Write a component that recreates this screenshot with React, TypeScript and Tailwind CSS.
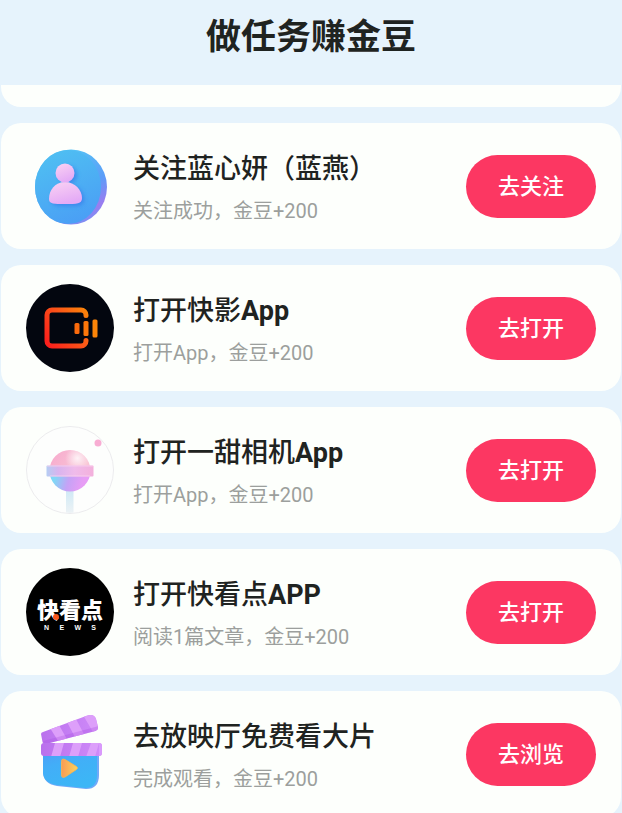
import React from 'react';

interface Task {
  id: string;
  title: string;
  latin?: string;
  reward: string;
  action: string;
  icon: React.ReactNode;
}

function FollowIcon() {
  return (
    <svg viewBox="0 0 88 88" className="w-full h-full" aria-hidden="true">
      <defs>
        <linearGradient id="follow-edge" x1="0.4" y1="0" x2="0.8" y2="1">
          <stop offset="0" stopColor="#55c5f5" />
          <stop offset="0.5" stopColor="#5b9df8" />
          <stop offset="0.8" stopColor="#9a7df0" />
          <stop offset="1" stopColor="#6f96f5" />
        </linearGradient>
        <linearGradient id="follow-face" x1="0.2" y1="0" x2="0.6" y2="1">
          <stop offset="0" stopColor="#4fc0f2" />
          <stop offset="1" stopColor="#4a9ff5" />
        </linearGradient>
        <linearGradient id="follow-body" x1="0" y1="0" x2="0.4" y2="1">
          <stop offset="0" stopColor="#fbd3f3" />
          <stop offset="1" stopColor="#e4abf6" />
        </linearGradient>
        <filter id="follow-shadow" x="-30%" y="-30%" width="170%" height="170%">
          <feGaussianBlur stdDeviation="2" />
        </filter>
      </defs>
      <ellipse cx="45" cy="45" rx="36" ry="37.5" fill="url(#follow-edge)" />
      <ellipse cx="42" cy="45" rx="33" ry="37" fill="url(#follow-face)" />
      <g filter="url(#follow-shadow)" fill="#3479e8" opacity="0.7">
        <circle cx="42" cy="33" r="9" />
        <path d="M26 59c0-10 6-16 16-16s16 7 16 15c0 6-6 6-16 6s-16 0-16-5z" />
      </g>
      <path d="M23 57c0-9 6-17 16-17s17 8 17 16c0 6-5 6-17 6-11 0-16 0-16-5z" fill="url(#follow-body)" />
      <circle cx="39" cy="31" r="9.5" fill="url(#follow-body)" />
    </svg>
  );
}

function KuaiyingIcon() {
  return (
    <svg viewBox="0 0 88 88" className="w-full h-full" aria-hidden="true">
      <defs>
        <linearGradient id="ky" gradientUnits="userSpaceOnUse" x1="20" y1="58" x2="64" y2="26">
          <stop offset="0" stopColor="#fb1f1c" />
          <stop offset="0.5" stopColor="#fb5318" />
          <stop offset="1" stopColor="#fb8a08" />
        </linearGradient>
      </defs>
      <circle cx="44" cy="44" r="44" fill="#03060f" />
      <path
        d="M60 31.500v-.5a5 5 0 0 0-5-5H26a5 5 0 0 0-5 5v26a5 5 0 0 0 5 5h29a5 5 0 0 0 5-5v-.5"
        fill="none"
        stroke="url(#ky)"
        strokeWidth="5"
        strokeLinecap="round"
      />
      <rect x="48.5" y="39" width="5" height="11" rx="1.500" fill="#fb6a0c" />
      <rect x="57.5" y="37" width="5" height="15" rx="1.500" fill="#fb760a" />
      <rect x="66.5" y="35.500" width="5" height="18" rx="1.500" fill="#fb8408" />
    </svg>
  );
}

function LollipopIcon() {
  return (
    <svg viewBox="0 0 88 88" className="w-full h-full" aria-hidden="true">
      <defs>
        <clipPath id="lolli-clip">
          <circle cx="44" cy="44" r="43" />
        </clipPath>
        <linearGradient id="lolli-top" x1="0" y1="0" x2="1" y2="0.3">
          <stop offset="0" stopColor="#f7a9cd" />
          <stop offset="1" stopColor="#f9c6d6" />
        </linearGradient>
        <radialGradient id="lolli-shine" cx="0.68" cy="0.2" r="0.3">
          <stop offset="0" stopColor="#fff" stopOpacity="0.8" />
          <stop offset="1" stopColor="#fff" stopOpacity="0" />
        </radialGradient>
        <linearGradient id="lolli-bottom" x1="0.1" y1="0.5" x2="0.8" y2="0.6">
          <stop offset="0" stopColor="#7fd8f6" />
          <stop offset="0.5" stopColor="#c5a2f6" />
          <stop offset="1" stopColor="#e79df5" />
        </linearGradient>
        <linearGradient id="lolli-band" x1="0" y1="0" x2="1" y2="0">
          <stop offset="0" stopColor="#b5cdf3" />
          <stop offset="0.25" stopColor="#d9b4ee" />
          <stop offset="0.6" stopColor="#f0bbea" />
          <stop offset="1" stopColor="#f3b0dc" />
        </linearGradient>
        <linearGradient id="lolli-stick" x1="0" y1="0" x2="0" y2="1">
          <stop offset="0" stopColor="#cfe9f6" />
          <stop offset="1" stopColor="#eef3f5" />
        </linearGradient>
      </defs>
      <circle cx="44" cy="44" r="43.5" fill="#fdfefd" stroke="#ececee" />
      <rect x="40" y="64" width="7.5" height="24" fill="url(#lolli-stick)" clipPath="url(#lolli-clip)" />
      <path d="M23.500 44.500a20.500 20.500 0 0 1 41 0z" fill="url(#lolli-top)" />
      <circle cx="44" cy="44.5" r="20.5" fill="url(#lolli-shine)" />
      <path d="M23.500 45a20.500 20.500 0 0 0 41 0z" fill="url(#lolli-bottom)" />
      <rect x="20.5" y="39.5" width="47" height="11" rx="1" fill="url(#lolli-band)" />
      <path d="M21 40h46M24 50h40" stroke="#f9d3ef" strokeWidth="0.8" />
      <circle cx="72" cy="17" r="3.5" fill="#f8add3" />
    </svg>
  );
}

function KuaikandianIcon() {
  return (
    <div className="relative w-full h-full rounded-full bg-black text-white flex flex-col items-center justify-center">
      <span className="font-['Noto_Sans_CJK_SC',sans-serif] font-black text-[22px] leading-8">快看点</span>
      <span className="w-[52px] flex justify-between font-['Liberation_Sans',sans-serif] font-bold text-[7px] leading-2">
        <span>N</span>
        <span>E</span>
        <span>W</span>
        <span>S</span>
      </span>
      <span className="absolute left-[27px] top-[46px] w-1.5 h-1.5 rounded-full bg-[#f8561c]" />
    </div>
  );
}

function MovieIcon() {
  return (
    <svg viewBox="0 0 88 88" className="w-full h-full" aria-hidden="true">
      <defs>
        <linearGradient id="movie-body" x1="0" y1="0" x2="0.5" y2="1">
          <stop offset="0" stopColor="#4d9cf6" />
          <stop offset="0.4" stopColor="#42aef8" />
          <stop offset="1" stopColor="#3cb6f6" />
        </linearGradient>
        <linearGradient id="movie-bar" x1="0" y1="0" x2="1" y2="0">
          <stop offset="0" stopColor="#b970ec" />
          <stop offset="1" stopColor="#cf8bf9" />
        </linearGradient>
        <linearGradient id="movie-play" x1="0" y1="0" x2="1" y2="0">
          <stop offset="0" stopColor="#f99b55" />
          <stop offset="1" stopColor="#fbd35c" />
        </linearGradient>
        <clipPath id="movie-arm">
          <path d="M15 24q0-1.500 2-2L60 6q8-3 10 3l2 8q.5 3-2.500 4L20 34q-3 1-3.500-2z" />
        </clipPath>
        <clipPath id="movie-strip">
          <rect x="15" y="33" width="61" height="13" rx="3" />
        </clipPath>
      </defs>
      <path d="M17 40h56v25q0 14-13 14l-29-3q-13-2-14-13z" fill="#6fa9f9" />
      <path d="M17 40h54v25q0 13-12 13l-28-3q-13-2-14-12z" fill="url(#movie-body)" />
      <g clipPath="url(#movie-arm)">
        <path d="M12 0h62v38H12z" fill="url(#movie-bar)" />
        <path d="m24 18 9-3 9 16-8 3zM41 12l9-3 9 17-9 3zM57 5l10-3 9 15-9 5z" fill="#dd9ffa" />
        <path d="M17 31 73 16v6L20 37z" fill="#a94fe0" opacity="0.3" />
      </g>
      <g clipPath="url(#movie-strip)">
        <path d="M15 33h61v14H15z" fill="url(#movie-bar)" />
        <path d="M29 33h9l-4 14h-9zM47 33h9l-4 14h-9zM65 33h8l-4 14h-9z" fill="#dc9ffa" />
        <path d="M73 33h3v14h-3z" fill="#d99afb" />
      </g>
      <path d="M35.500 51.500q0-3.500 3.500-2l11.500 7q2 1.500 0 3L39 67q-3.500 1.500-3.500-2z" fill="url(#movie-play)" stroke="#fbb44c" strokeWidth="0.8" />
    </svg>
  );
}

const tasks: Task[] = [
  { id: 'follow', title: '关注蓝心妍（蓝燕）', reward: '关注成功，金豆+200', action: '去关注', icon: <FollowIcon /> },
  { id: 'kuaiying', title: '打开快影', latin: 'App', reward: '打开App，金豆+200', action: '去打开', icon: <KuaiyingIcon /> },
  { id: 'yitian', title: '打开一甜相机', latin: 'App', reward: '打开App，金豆+200', action: '去打开', icon: <LollipopIcon /> },
  { id: 'kuaikandian', title: '打开快看点', latin: 'APP', reward: '阅读1篇文章，金豆+200', action: '去打开', icon: <KuaikandianIcon /> },
  { id: 'movie', title: '去放映厅免费看大片', reward: '完成观看，金豆+200', action: '去浏览', icon: <MovieIcon /> },
];

function TaskCard({ task }: { task: Task }) {
  return (
    <li className="h-[126px] shrink-0 rounded-[20px] bg-[#fdfffc] px-[25px] flex items-center">
      <div className="w-[88px] h-[88px] shrink-0">{task.icon}</div>
      <div className="ml-[19px] pt-2 flex-1 min-w-0 whitespace-nowrap">
        <h2 className="text-[27px] leading-[42px] font-medium text-[#1f2321]">
          {task.title}
          {task.latin && <span className="font-bold">{task.latin}</span>}
        </h2>
        <p className="text-[20px] leading-[42px] text-[#9c9f9d]">{task.reward}</p>
      </div>
      <button
        type="button"
        className="w-[130px] h-[63px] shrink-0 rounded-full bg-[#fc3762] text-white text-[22px] font-medium cursor-pointer"
      >
        {task.action}
      </button>
    </li>
  );
}

export default function App() {
  return (
    <div className="h-screen overflow-hidden flex flex-col bg-[#e6f3fc] font-[Roboto,'Noto_Sans_CJK_SC',sans-serif]">
      <header className="h-[85px] shrink-0 pb-2 flex items-center justify-center">
        <h1 className="text-[35px] font-bold text-[#1f2321]">做任务赚金豆</h1>
      </header>
      <main className="flex-1 min-h-0 overflow-hidden px-px">
        {/* Tail of the card scrolled under the header */}
        <div className="h-[22px] rounded-b-[20px] bg-[#fdfffc]" />
        <ul className="mt-4 flex flex-col gap-4">
          {tasks.map((task) => (
            <TaskCard key={task.id} task={task} />
          ))}
        </ul>
      </main>
    </div>
  );
}
